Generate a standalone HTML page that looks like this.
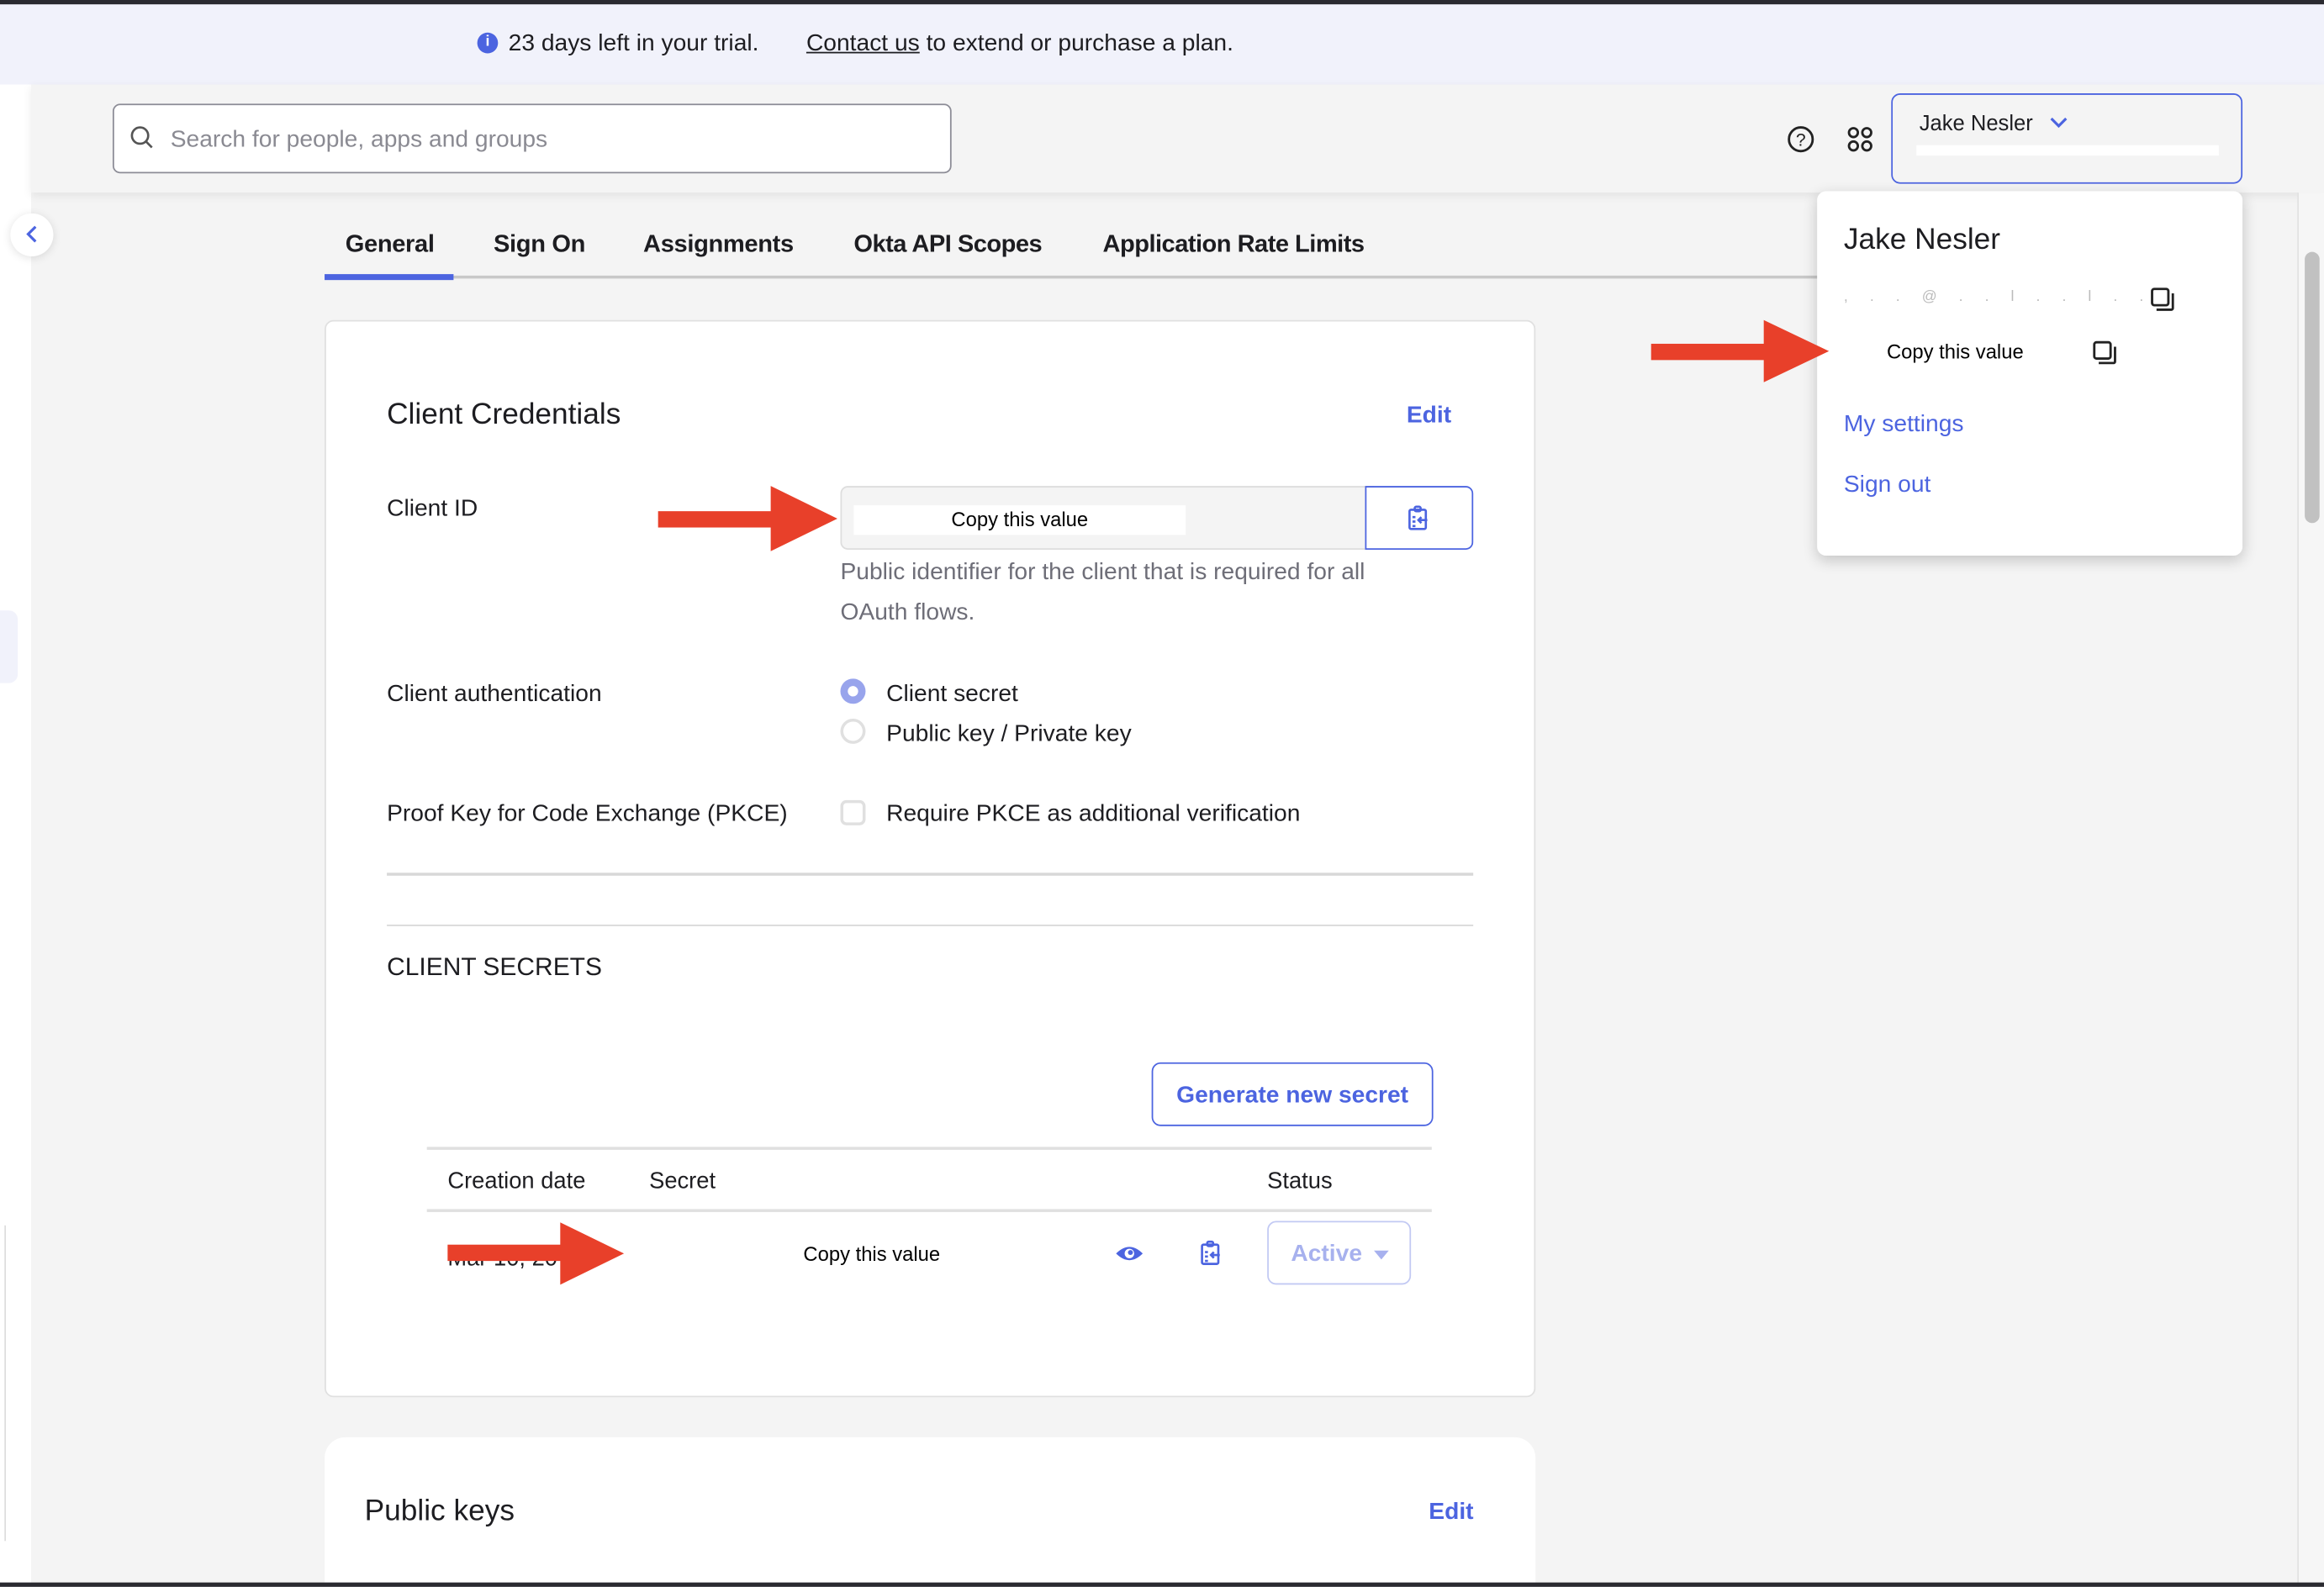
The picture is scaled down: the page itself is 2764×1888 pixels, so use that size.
<!DOCTYPE html>
<html><head><meta charset="utf-8"><style>
*{margin:0;padding:0;box-sizing:border-box}
html,body{width:2764px;height:1888px;overflow:hidden;background:#f4f4f4}
#w{position:absolute;left:0;top:0;width:1568px;height:1071px;transform:scale(1.76276);transform-origin:0 0;font-family:"Liberation Sans",sans-serif;color:#1d1d21;background:#f4f4f4;overflow:hidden}
.a{position:absolute;white-space:nowrap}
.blue{color:#4c64e0}
.lbl{font-size:16px;color:#1d1d21}
.arrow{position:absolute;width:0;height:0;border-style:solid;border-color:transparent transparent transparent #e8402a}
.shaft{position:absolute;background:#e8402a}
</style></head><body><div id="w">
<div class="a" style="left:0;top:0;width:1568px;height:3px;background:#2a2a30"></div>
<div class="a" style="left:0;top:3px;width:1568px;height:54px;background:#f1f2fb"></div>
<div class="a" style="left:322px;top:22px;width:14px;height:14px;border-radius:50%;background:#4c64e0;color:#fff;font-size:10px;font-weight:bold;text-align:center;line-height:14px">i</div>
<div class="a" style="left:343px;top:21px;font-size:16px">23 days left in your trial.</div>
<div class="a" style="left:544px;top:21px;font-size:16px"><span style="text-decoration:underline">Contact us</span> to extend or purchase a plan.</div>
<div class="a" style="left:0;top:57px;width:21px;height:1014px;background:#fff"></div>
<div class="a" style="left:0;top:412px;width:12px;height:49px;background:#f1f2fb;border-radius:0 6px 6px 0"></div>
<div class="a" style="left:3px;top:827px;width:1px;height:213px;background:#ddd"></div>
<div class="a" style="left:21px;top:57px;width:1547px;height:73px;background:#f4f4f4;box-shadow:0 2px 6px rgba(0,0,0,.08)"></div>
<div class="a" style="left:76px;top:70px;width:566px;height:47px;background:#fff;border:1px solid #8c8c96;border-radius:5px"></div>
<svg class="a" style="left:87px;top:84px" width="18" height="18" viewBox="0 0 18 18"><circle cx="7.5" cy="7.5" r="5.5" fill="none" stroke="#555" stroke-width="1.5"/><line x1="11.5" y1="11.5" x2="15.5" y2="15.5" stroke="#555" stroke-width="1.5"/></svg>
<div class="a" style="left:115px;top:86px;font-size:16px;color:#8a8a92">Search for people, apps and groups</div>
<svg class="a" style="left:1205px;top:84px" width="20" height="20" viewBox="0 0 20 20"><circle cx="10" cy="10" r="8" fill="none" stroke="#222" stroke-width="1.6"/><text x="10" y="14.5" font-size="12" text-anchor="middle" font-family="Liberation Sans" fill="#222">?</text></svg>
<svg class="a" style="left:1245px;top:84px" width="20" height="20" viewBox="0 0 20 20" fill="none" stroke="#222" stroke-width="1.6"><circle cx="5.5" cy="5.5" r="3"/><circle cx="14.5" cy="5.5" r="3"/><circle cx="5.5" cy="14.5" r="3"/><circle cx="14.5" cy="14.5" r="3"/></svg>
<div class="a" style="left:1276px;top:63px;width:237px;height:61px;border:1.5px solid #4c64e0;border-radius:6px"></div>
<div class="a" style="left:1295px;top:76px;font-size:14.5px">Jake Nesler</div>
<svg class="a" style="left:1382px;top:78px" width="14" height="10" viewBox="0 0 14 10"><path d="M2 2 L7 7 L12 2" fill="none" stroke="#4c64e0" stroke-width="1.8"/></svg>
<div class="a" style="left:1293px;top:98px;width:204px;height:7px;background:#fff"></div>
<div class="a" style="left:7px;top:144px;width:29px;height:29px;border-radius:50%;background:#fff;box-shadow:0 1px 6px rgba(0,0,0,.12)"></div>
<svg class="a" style="left:15px;top:151px" width="14" height="14" viewBox="0 0 14 14"><path d="M9 2 L4 7 L9 12" fill="none" stroke="#4c64e0" stroke-width="1.8"/></svg>
<div class="a" style="left:219px;top:186px;width:1010px;height:2px;background:#c8c8c8"></div>
<div class="a" style="left:219px;top:185px;width:87px;height:3.5px;background:#4c64e0"></div>
<div class="a" style="left:233px;top:156px;font-size:16.5px;font-weight:bold;letter-spacing:-0.2px">General</div>
<div class="a" style="left:333px;top:156px;font-size:16.5px;font-weight:bold;letter-spacing:-0.2px">Sign On</div>
<div class="a" style="left:434px;top:156px;font-size:16.5px;font-weight:bold;letter-spacing:-0.2px">Assignments</div>
<div class="a" style="left:576px;top:156px;font-size:16.5px;font-weight:bold;letter-spacing:-0.3px">Okta API Scopes</div>
<div class="a" style="left:744px;top:156px;font-size:16.5px;font-weight:bold;letter-spacing:-0.3px">Application Rate Limits</div>
<!-- card 1 -->
<div class="a" style="left:219px;top:216px;width:817px;height:727px;background:#fff;border:1px solid #e0e0e0;border-radius:6px"></div>
<div class="a" style="left:261px;top:269px;font-size:20px">Client Credentials</div>
<div class="a blue" style="left:949px;top:272px;font-size:16px;font-weight:bold">Edit</div>
<div class="a lbl" style="left:261px;top:335px">Client ID</div>
<div class="a" style="left:567px;top:328px;width:360px;height:43px;background:#f4f4f4;border:1px solid #ddd;border-radius:5px 0 0 5px"></div>
<div class="a" style="left:576px;top:341px;width:224px;height:20px;background:#fff"></div>
<div class="a" style="left:576px;top:343px;width:224px;text-align:center;font-size:13.5px;color:#000">Copy this value</div>
<div class="a" style="left:921px;top:328px;width:73px;height:43px;background:#fff;border:1.5px solid #4c64e0;border-radius:0 5px 5px 0"></div>
<svg class="a" style="left:949px;top:341px" width="16" height="18" viewBox="0 0 16 18" fill="none" stroke="#4c64e0" stroke-width="1.5"><rect x="2" y="3" width="11" height="13" rx="1"/><rect x="5.5" y="1" width="4" height="3" rx="1"/><path d="M4 8h2M4 11h2M4 14h2M14 10H8M10 8l-2 2 2 2"/></svg>
<div class="a" style="left:567px;top:373px;font-size:16px;color:#6e6e78;line-height:27px;white-space:normal;width:400px">Public identifier for the client that is required for all OAuth flows.</div>
<div class="a lbl" style="left:261px;top:460px">Client authentication</div>
<div class="a" style="left:567px;top:458px;width:17px;height:17px;border-radius:50%;background:#98a4ec"></div>
<div class="a" style="left:572px;top:463px;width:7px;height:7px;border-radius:50%;background:#fff"></div>
<div class="a lbl" style="left:598px;top:460px">Client secret</div>
<div class="a" style="left:567px;top:485px;width:17px;height:17px;border-radius:50%;border:2px solid #e0e0e0;background:#fff"></div>
<div class="a lbl" style="left:598px;top:487px">Public key / Private key</div>
<div class="a lbl" style="left:261px;top:541px">Proof Key for Code Exchange (PKCE)</div>
<div class="a" style="left:567px;top:540px;width:17px;height:17px;border-radius:4px;border:2px solid #e0e0e0;background:#fff"></div>
<div class="a lbl" style="left:598px;top:541px">Require PKCE as additional verification</div>
<div class="a" style="left:261px;top:589px;width:733px;height:1.5px;background:#d8d8d8"></div>
<div class="a" style="left:261px;top:624px;width:733px;height:1px;background:#d8d8d8"></div>
<div class="a" style="left:261px;top:643px;font-size:17px">CLIENT SECRETS</div>
<div class="a" style="left:777px;top:717px;width:190px;height:43px;border:1.5px solid #4c64e0;border-radius:6px"></div>
<div class="a blue" style="left:777px;top:731px;width:190px;text-align:center;font-size:16px;font-weight:bold">Generate new secret</div>
<div class="a" style="left:288px;top:774px;width:678px;height:1.5px;background:#e0e0e0"></div>
<div class="a" style="left:288px;top:816px;width:678px;height:1.5px;background:#e0e0e0"></div>
<div class="a" style="left:302px;top:789px;font-size:15.5px">Creation date</div>
<div class="a" style="left:438px;top:789px;font-size:15.5px">Secret</div>
<div class="a" style="left:855px;top:789px;font-size:15.5px">Status</div>
<div class="a" style="left:302px;top:841px;font-size:15.5px">Mar 10, 20</div>
<div class="a" style="left:542px;top:839px;font-size:13.5px;color:#000">Copy this value</div>
<svg class="a" style="left:752px;top:839px" width="20" height="14" viewBox="0 0 20 14"><path d="M1 7 Q10 -2 19 7 Q10 16 1 7Z" fill="#4c64e0"/><circle cx="10" cy="7" r="3.2" fill="#fff"/><circle cx="10.7" cy="6.3" r="1.7" fill="#4c64e0"/></svg>
<svg class="a" style="left:809px;top:837px" width="16" height="18" viewBox="0 0 16 18" fill="none" stroke="#4c64e0" stroke-width="1.5"><rect x="2" y="3" width="11" height="13" rx="1"/><rect x="5.5" y="1" width="4" height="3" rx="1"/><path d="M4 8h2M4 11h2M4 14h2M14 10H8M10 8l-2 2 2 2"/></svg>
<div class="a" style="left:855px;top:824px;width:97px;height:43px;border:1.5px solid #c2c9f3;border-radius:6px"></div>
<div class="a" style="left:871px;top:838px;font-size:16px;font-weight:bold;color:#a7b1ee">Active</div>
<div class="a" style="left:927px;top:844px;width:0;height:0;border-left:5px solid transparent;border-right:5px solid transparent;border-top:6px solid #a7b1ee"></div>
<!-- card 2 -->
<div class="a" style="left:219px;top:970px;width:817px;height:120px;background:#fff;border-radius:14px"></div>
<div class="a" style="left:246px;top:1009px;font-size:20px">Public keys</div>
<div class="a blue" style="left:964px;top:1012px;font-size:16px;font-weight:bold">Edit</div>
<!-- scrollbar -->
<div class="a" style="left:1550px;top:130px;width:1px;height:941px;background:#e2e2e2"></div>
<div class="a" style="left:1551px;top:130px;width:17px;height:941px;background:#f6f6f6"></div>
<div class="a" style="left:1555px;top:170px;width:10px;height:183px;background:#c1c1c1;border-radius:5px"></div>
<div class="a" style="left:0;top:1068px;width:1568px;height:3px;background:#2a2a30"></div>
<!-- dropdown -->
<div class="a" style="left:1226px;top:129px;width:287px;height:246px;background:#fff;border-radius:6px;box-shadow:0 3px 10px rgba(0,0,0,.2)"></div>
<div class="a" style="left:1244px;top:151px;font-size:20px">Jake Nesler</div>
<div class="a" style="left:1244px;top:195px;font-size:10px;color:#bbb;letter-spacing:6px">, . . @ . . l . . l . .</div>
<svg class="a" style="left:1450px;top:193px" width="18" height="18" viewBox="0 0 18 18" fill="none" stroke="#222" stroke-width="1.6"><rect x="2" y="2" width="11" height="11" rx="1.5"/><path d="M16 5v10a1 1 0 0 1-1 1H5"/></svg>
<div class="a" style="left:1273px;top:230px;font-size:13.5px;color:#000">Copy this value</div>
<svg class="a" style="left:1411px;top:229px" width="18" height="18" viewBox="0 0 18 18" fill="none" stroke="#222" stroke-width="1.6"><rect x="2" y="2" width="11" height="11" rx="1.5"/><path d="M16 5v10a1 1 0 0 1-1 1H5"/></svg>
<div class="a blue" style="left:1244px;top:278px;font-size:16px">My settings</div>
<div class="a blue" style="left:1244px;top:319px;font-size:16px">Sign out</div>
<!-- arrows -->
<div class="shaft" style="left:1114px;top:232px;width:80px;height:11px"></div>
<div class="arrow" style="left:1190px;top:216px;border-width:21px 0 21px 44px"></div>
<div class="shaft" style="left:444px;top:345px;width:80px;height:11px"></div>
<div class="arrow" style="left:520px;top:328px;border-width:22px 0 22px 45px"></div>
<div class="shaft" style="left:302px;top:840px;width:80px;height:11px"></div>
<div class="arrow" style="left:378px;top:825px;border-width:21px 0 21px 43px"></div>
</div></body></html>
